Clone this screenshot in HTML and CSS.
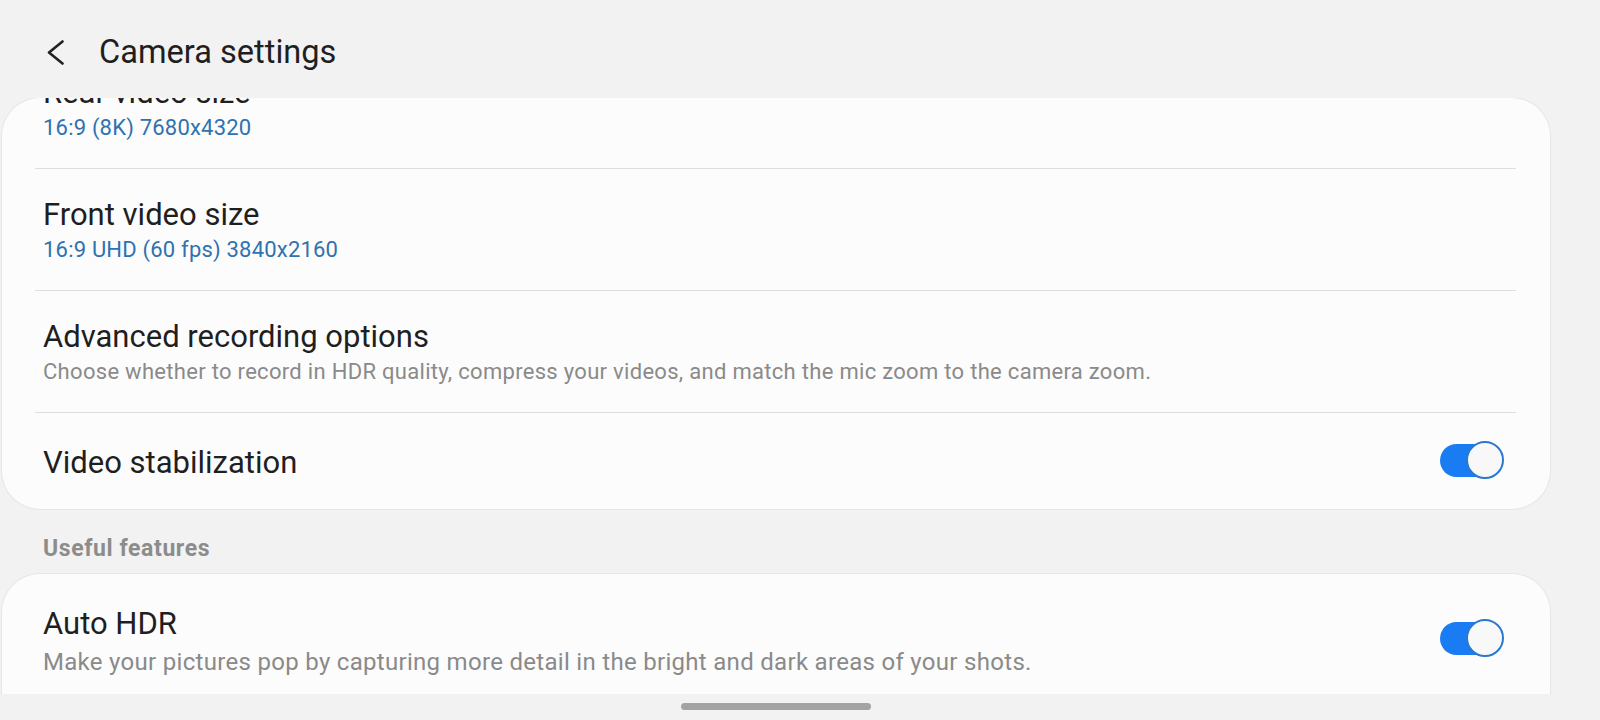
FILE: index.html
```html
<!DOCTYPE html>
<html lang="en">
<head>
    <meta charset="UTF-8">
    <meta name="viewport" content="width=device-width, initial-scale=1.0">
    <title>Camera settings</title>
    <link rel="stylesheet" href="styles.css">
</head>
<body>
    <div class="header">
        <svg class="back" width="18" height="25" viewBox="0 0 18 25">
            <polyline points="15.5,1.5 2,12.5 15.5,23.5" fill="none" stroke="#222" stroke-width="2.6" stroke-linecap="round" stroke-linejoin="round"/>
        </svg>
        <h1>Camera settings</h1>
    </div>

    <div class="viewport">
        <div class="card">
            <!-- fila cortada por el scroll -->
            <div class="row row-cut">
                <div class="text">
                    <div class="title">Rear video size</div>
                    <div class="value">16:9 (8K) 7680x4320</div>
                </div>
            </div>
            <div class="divider"></div>
            <div class="row">
                <div class="text">
                    <div class="title">Front video size</div>
                    <div class="value">16:9 UHD (60 fps) 3840x2160</div>
                </div>
            </div>
            <div class="divider"></div>
            <div class="row">
                <div class="text">
                    <div class="title">Advanced recording options</div>
                    <div class="sub">Choose whether to record in HDR quality, compress your videos, and match the mic zoom to the camera zoom.</div>
                </div>
            </div>
            <div class="divider"></div>
            <div class="row row-single">
                <div class="text">
                    <div class="title">Video stabilization</div>
                </div>
                <div class="switch"><div class="track"></div><div class="thumb"></div></div>
            </div>
        </div>

        <div class="section-label">Useful features</div>

        <div class="card card-open">
            <div class="row row-first">
                <div class="text">
                    <div class="title">Auto HDR</div>
                    <div class="sub">Make your pictures pop by capturing more detail in the bright and dark areas of your shots.</div>
                </div>
                <div class="switch"><div class="track"></div><div class="thumb"></div></div>
            </div>
        </div>
    </div>

    <div class="navbar">
        <div class="handle"></div>
    </div>
</body>
</html>
```

FILE: styles.css
```css
body {
    margin: 0;
    background: #f2f2f2;
    font-family: Roboto, "Liberation Sans", sans-serif;
    color: #1f1f1f;
    width: 1600px;
    height: 720px;
    overflow: hidden;
}
.header {
    display: flex;
    align-items: center;
    height: 40px;
    padding: 32px 0 26px 47px;
}
.back {
    display: block;
}
.header h1 {
    margin: 0 0 0 34px;
    font-size: 32.6px;
    line-height: 40px;
    font-weight: 400;
    color: #1f1f1f;
}
.viewport {
    width: 1552px;
    height: 596px;
    overflow: hidden;
}
.card {
    margin-left: 2px;
    width: 1548px;
    background: #fcfcfc;
    border-radius: 38px;
    box-shadow: 0 0 0 1px #e6e6e6;
    overflow: hidden;
}
.card-open {
    padding-bottom: 60px;
}
.row {
    display: flex;
    align-items: center;
    padding: 28px 46px 26px 41px;
}
.row-cut {
    margin-top: -51px;
}
.row-single {
    padding-top: 31px;
    padding-bottom: 27px;
}
.row-first {
    padding-top: 32px;
}
.text {
    flex: 1;
}
.title {
    font-size: 31px;
    line-height: 36px;
    color: #1f1f1f;
}
.value, .sub {
    font-size: 22px;
    line-height: 28px;
    margin-top: 3px;
}
.value {
    color: #2f72b0;
    letter-spacing: 0.2px;
}
.sub {
    color: #8a8a8a;
    letter-spacing: 0.3px;
}
.row-first .sub {
    font-size: 24px;
    margin-top: 6px;
}
.divider {
    height: 1px;
    background: #dedede;
    margin: 0 34px 0 33px;
}
.section-label {
    font-size: 23px;
    line-height: 28px;
    font-weight: 700;
    letter-spacing: 0.6px;
    color: #8c8c8c;
    margin: 26px 0 11px 43px;
}
.switch {
    display: flex;
    align-items: center;
    width: 64px;
    height: 38px;
    margin: -3px 0 3px;
}
.track {
    width: 52px;
    height: 33px;
    border-radius: 17px;
    background: #1a7cf3;
}
.thumb {
    width: 38px;
    height: 38px;
    box-sizing: border-box;
    border: 2px solid #2a78d2;
    border-radius: 50%;
    background: #f8f8f8;
    margin-left: -26px;
}
.navbar {
    width: 1552px;
    height: 26px;
    display: flex;
    justify-content: center;
}
.handle {
    width: 190px;
    height: 7px;
    margin-top: 9px;
    border-radius: 4px;
    background: #a3a3a3;
}
```
